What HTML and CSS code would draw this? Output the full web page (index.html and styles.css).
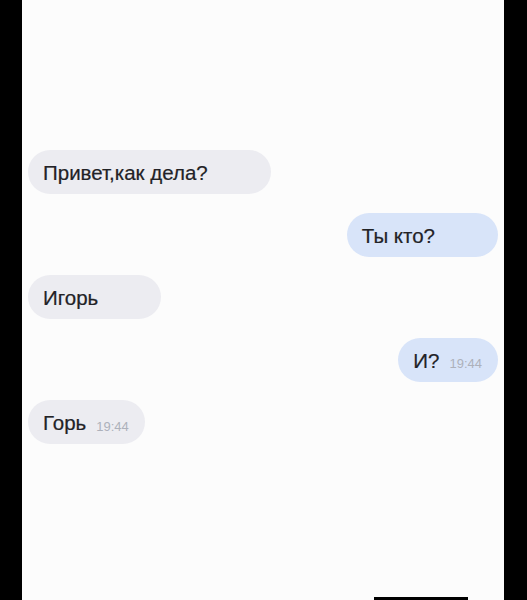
FILE: index.html
```html
<!DOCTYPE html>
<html lang="ru">
<head>
	<meta charset="utf-8" />
	<title>Чат</title>
	<link rel="stylesheet" href="styles.css">
</head>
<body>
	<div class="frame">
		<div class="edge"></div>
		<div class="screen">
			<div class="chat">
				<div class="msg in wide">
					<span class="text">Привет,как дела?</span>
				</div>
				<div class="msg out wide">
					<span class="text">Ты кто?</span>
				</div>
				<div class="msg in wide">
					<span class="text">Игорь</span>
				</div>
				<div class="msg out">
					<span class="text">И?</span>
					<span class="time">19:44</span>
				</div>
				<div class="msg in">
					<span class="text">Горь</span>
					<span class="time">19:44</span>
				</div>
			</div>
			<div class="home-bar"></div>
		</div>
		<div class="edge right"></div>
	</div>
</body>
</html>
```
FILE: styles.css
```css
html, body{
	margin: 0;
	height: 100%;
	background: #000;
}

.frame{
	display: flex;
	height: 600px;
}

.edge{
	width: 22px;
	background: #000;
	flex: none;
}

.edge.right{
	width: 23px;
}

.screen{
	flex: 1;
	background: #fcfcfc;
	display: flex;
	flex-direction: column;
	font-family: "Liberation Sans", Arial, sans-serif;
}

.chat{
	flex: 1;
	display: flex;
	flex-direction: column;
	gap: 18.5px;
	padding: 150px 6px 0 6px;
}

.msg{
	height: 44px;
	border-radius: 22px;
	display: flex;
	align-items: center;
	gap: 10px;
	padding: 0 16px 0 15px;
	box-sizing: border-box;
}

.msg.wide{
	padding-right: 63px;
}

.msg.in{
	align-self: flex-start;
	background: #ececf1;
}

.msg.out{
	align-self: flex-end;
	background: #d8e4f9;
}

.text{
	font-size: 20.5px;
	color: #222226;
	-webkit-text-stroke: 0.2px #222226;
	margin-top: 2px;
}

.time{
	font-size: 13px;
	color: #adb1bb;
	margin-top: 8px;
}

/* home indicator */
.home-bar{
	width: 94px;
	height: 3px;
	background: #000;
	margin-left: 352px;
}
```
